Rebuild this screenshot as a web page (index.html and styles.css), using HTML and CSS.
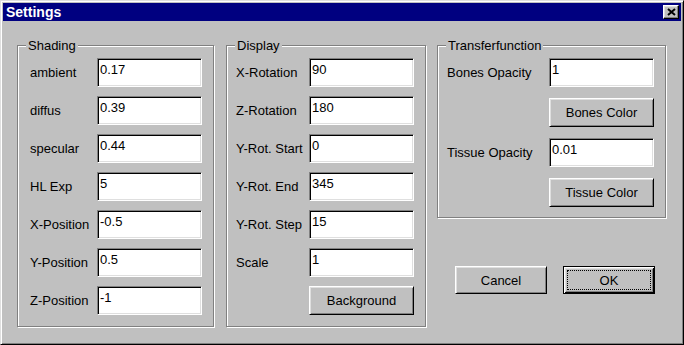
FILE: index.html
```html
<!DOCTYPE html>
<html lang="en">
<head>
<meta charset="UTF-8">
<title>Settings</title>
<link rel="stylesheet" href="styles.css">
</head>
<body>
<div class="window">
  <div class="titlebar">
    <span class="title">Settings</span>
    <button class="close" aria-label="Close">
      <svg width="9" height="8" viewBox="0 0 9 8"><path d="M1 1 L8 7 M8 1 L1 7" stroke="#000" stroke-width="2" fill="none"/></svg>
    </button>
  </div>
  <div class="content">
    <fieldset class="group shading">
      <legend>Shading</legend>
      <div class="rows">
        <div class="row"><span class="label">ambient</span><div class="field">0.17</div></div>
        <div class="row"><span class="label">diffus</span><div class="field">0.39</div></div>
        <div class="row"><span class="label">specular</span><div class="field">0.44</div></div>
        <div class="row"><span class="label">HL Exp</span><div class="field">5</div></div>
        <div class="row"><span class="label">X-Position</span><div class="field">-0.5</div></div>
        <div class="row"><span class="label">Y-Position</span><div class="field">0.5</div></div>
        <div class="row"><span class="label">Z-Position</span><div class="field">-1</div></div>
      </div>
    </fieldset>
    <fieldset class="group display">
      <legend>Display</legend>
      <div class="rows">
        <div class="row"><span class="label">X-Rotation</span><div class="field">90</div></div>
        <div class="row"><span class="label">Z-Rotation</span><div class="field">180</div></div>
        <div class="row"><span class="label">Y-Rot. Start</span><div class="field">0</div></div>
        <div class="row"><span class="label">Y-Rot. End</span><div class="field">345</div></div>
        <div class="row"><span class="label">Y-Rot. Step</span><div class="field">15</div></div>
        <div class="row"><span class="label">Scale</span><div class="field">1</div></div>
        <div class="row"><span class="label"></span><button class="btn wide">Background</button></div>
      </div>
    </fieldset>
    <div class="side">
      <fieldset class="group transfer">
        <legend>Transferfunction</legend>
        <div class="rows">
          <div class="row"><span class="label">Bones Opacity</span><div class="field">1</div></div>
          <div class="row"><span class="label"></span><button class="btn wide">Bones Color</button></div>
          <div class="row"><span class="label">Tissue Opacity</span><div class="field">0.01</div></div>
          <div class="row"><span class="label"></span><button class="btn wide">Tissue Color</button></div>
        </div>
      </fieldset>
      <div class="actions">
        <button class="btn action">Cancel</button>
        <button class="btn action default"><span class="focus">OK</span></button>
      </div>
    </div>
  </div>
</div>
</body>
</html>
```

FILE: styles.css
```css
body { margin: 0; background: #c0c0c0; font-family: "Liberation Sans", Arial, sans-serif; font-size: 13px; color: #000; }
.window { width: 684px; height: 345px; box-sizing: border-box; background: #c0c0c0; border: 1px solid; border-color: #dfdfdf #000 #000 #dfdfdf; box-shadow: inset 1px 1px #fff, inset -1px -1px #808080; padding: 2px; }
.titlebar { height: 18px; background: #000080; display: flex; align-items: center; justify-content: space-between; padding: 0 2px 0 3px; }
.title { color: #fff; font-weight: bold; font-size: 14px; line-height: 18px; }
.close { width: 16px; height: 14px; padding: 0; background: #c0c0c0; border: 1px solid; border-color: #fff #000 #000 #fff; box-shadow: inset -1px -1px #808080, inset 1px 1px #dfdfdf; display: flex; align-items: center; justify-content: center; }
.close svg { display: block; }

.content { display: flex; align-items: flex-start; padding: 17px 0 0 14px; }
.group { margin: 0; padding: 0; min-width: 0; border: 1px solid #808080; box-shadow: inset 1px 1px #fff, 1px 1px #fff; }
.group legend { margin-left: 8px; padding: 0 2px; line-height: 15px; background: #c0c0c0; }
.rows { display: flex; flex-direction: column; gap: 9px; padding: 5px 11px 11px 9px; }
.row { display: flex; align-items: center; height: 29px; }
.label { line-height: 15px; white-space: nowrap; }
.field { width: 105px; height: 29px; box-sizing: border-box; background: #fff; border: 1px solid; border-color: #808080 #fff #fff #808080; box-shadow: inset 1px 1px #000, inset -1px -1px #dfdfdf; padding: 3px 2px 0; line-height: 15px; }

.shading { width: 197px; box-sizing: border-box; }
.shading .rows { padding-left: 12px; }
.shading .label { width: 67px; }
.display { width: 200px; box-sizing: border-box; margin-left: 12px; }
.display .label { width: 73px; }
.side { width: 229px; margin-left: 11px; }
.transfer { width: 229px; box-sizing: border-box; }
.transfer .rows { gap: 11px; padding-bottom: 10px; }
.transfer .label { width: 102px; }

.btn { font: inherit; color: #000; background: #c0c0c0; border: 1px solid; border-color: #fff #000 #000 #fff; box-shadow: inset 1px 1px #dfdfdf, inset -1px -1px #808080; padding: 0; }
.btn.wide { width: 105px; height: 29px; }
.actions { display: flex; justify-content: flex-end; gap: 16px; padding: 48px 11px 0 0; }
.btn.action { width: 92px; height: 28px; }
.btn.default { border-color: #000; box-shadow: inset 1px 1px #fff, inset -1px -1px #000, inset 2px 2px #dfdfdf, inset -2px -2px #808080; display: flex; padding: 3px; }
.focus { flex: 1; display: flex; align-items: center; justify-content: center; border: 1px dotted #000; }
```
